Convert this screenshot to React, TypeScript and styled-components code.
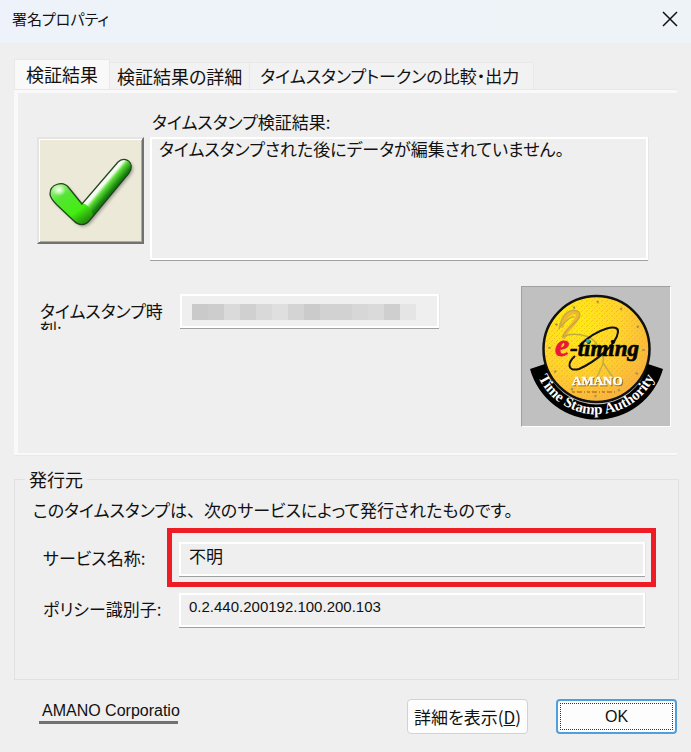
import React from "react";
import styled, { createGlobalStyle, css } from "styled-components";

const GlobalStyle = createGlobalStyle`
  *, *::before, *::after { box-sizing: border-box; }
  body {
    margin: 0;
    background: #efefef;
    color: #111;
    font-family: "Noto Sans CJK JP", "Liberation Sans", sans-serif;
    font-size: 17px;
    line-height: 24px;
    font-feature-settings: "palt";
  }
  button, input, textarea { font: inherit; color: inherit; font-feature-settings: inherit; }
`;

const Dialog = styled.main`
  min-height: 100vh;
  display: flex;
  flex-direction: column;
  background: #efefef;
`;

const TitleBar = styled.header`
  display: flex;
  align-items: center;
  justify-content: space-between;
  height: 43px;
  padding: 0 12px 5px;
  background: linear-gradient(90deg, #eef3fb, #eef3f8);
`;

const Title = styled.h1`
  margin: 0;
  font-size: 15px;
  font-weight: 400;
`;

const CloseButton = styled.button`
  display: grid;
  padding: 0;
  border: 0;
  background: none;
`;

const TabList = styled.div`
  display: flex;
  align-items: flex-end;
  height: 47px;
  padding: 0 14px;
`;

const Tab = styled.button<{ $selected?: boolean; $wide?: boolean }>`
  flex: none;
  height: 28px;
  padding: 0 ${(p) => (p.$wide ? "14px" : "7px")} 1px;
  border: 1px solid #e8e8e8;
  border-width: 1px 1px 0 0;
  background: #f2f2f2;
  white-space: nowrap;
  font-size: ${(p) => (p.$wide ? "17px" : "18px")};
  line-height: 24px;
  ${(p) =>
    p.$wide &&
    css`
      padding-left: 10px;
    `}
  ${(p) =>
    p.$selected &&
    css`
      height: 31px;
      padding: 0 11px 2px;
      border-left-width: 1px;
      background: #f9f9f9;
    `}
`;

const TabPanel = styled.section`
  margin: 0 14px;
  padding: 17px 6px 26px 19px;
  border: solid #f9f9f9;
  border-width: 3px 0 2px 4px;
  box-shadow: 0 1px #e8e8e8, 0 -1px #e8e8e8;
`;

const ResultArea = styled.div`
  display: grid;
  grid-template-columns: 107px 1fr;
  column-gap: 6px;
  padding-right: 23px;
`;

const StatusTile = styled.div`
  width: 107px;
  height: 107px;
  margin-top: 27px;
  border: 2px solid;
  border-color: #e4e4e4 #717171 #717171 #e4e4e4;
  box-shadow: inset 1px 1px #fff, inset -1px -1px #aaa;
  background: #ece9d8;
  svg { display: block; }
`;

const ResultLabel = styled.label`
  display: block;
  padding-left: 2px;
  margin-bottom: 3px;
`;

const sunken = css`
  display: block;
  width: 100%;
  border: 2px solid #fff;
  border-radius: 0;
  background: #efefef;
  box-shadow: 0 1px #a0a0a0, 1px 0 #e6e6e6;
  outline: none;
`;

const ResultText = styled.textarea`
  ${sunken}
  height: 123px;
  padding: 0 7px;
  line-height: 20px;
  resize: none;
  overflow: hidden;
`;

const Field = styled.input`
  ${sunken}
  height: 34px;
  padding: 0 8px 8px;
`;

const PolicyField = styled(Field)`
  font-family: "Liberation Sans", sans-serif;
  font-size: 15px;
`;

const TimeArea = styled.div`
  display: grid;
  grid-template-columns: 126px 1fr 150px;
  column-gap: 14px;
  padding-left: 3px;
  margin-top: 26px;
`;

const TimeLabel = styled.span`
  height: 28px;
  margin-top: 16px;
  overflow: hidden;
  line-height: 18px;
`;

const TimeValue = styled.div`
  ${sunken}
  max-width: 259px;
  height: 34px;
  margin-top: 8px;
  padding: 8px 10px;
  display: flex;
`;

const Mosaic = styled.i<{ $tone: string }>`
  flex: 0 1 16px;
  height: 16px;
  background: ${(p) => p.$tone};
`;

const Seal = styled.svg`
  display: block;
  width: 150px;
  height: 141px;
  border: 1px solid;
  border-color: #a0a0a0 #fff #fff #a0a0a0;
  background: #c0c0c0;
`;

const Issuer = styled.fieldset`
  min-width: 0;
  min-height: 213px;
  margin: 12px 12px 0 14px;
  padding: 7px 33px 0 18px;
  border: 1px solid #e1e1e1;
`;

const Legend = styled.legend`
  margin-left: -8px;
  padding: 0 4px;
  font-size: 18px;
`;

const Note = styled.p`
  margin: 0 0 20px;
`;

const FullWidth = styled.span`
  font-feature-settings: normal;
`;

const IssuerRow = styled.div`
  display: grid;
  grid-template-columns: 136px 1fr;
  align-items: center;
  padding-left: 10px;
  margin-bottom: 17px;
  > label { padding-bottom: 2px; }
`;

const Highlight = styled.div`
  position: relative;
  &::after {
    content: "";
    position: absolute;
    inset: -14px -11px -11px -12px;
    border: 5px solid #ee1c24;
    pointer-events: none;
  }
`;

const Footer = styled.footer`
  display: flex;
  align-items: flex-start;
  padding: 19px 14px 17px 39px;
`;

const Company = styled.span`
  width: 141px;
  height: 25px;
  padding-left: 3px;
  margin-right: auto;
  overflow: hidden;
  white-space: nowrap;
  font-family: "Liberation Sans", sans-serif;
  font-size: 16px;
  background: linear-gradient(#717171, #717171) left bottom / 139px 3px no-repeat;
`;

const PushButton = styled.button<{ $primary?: boolean }>`
  width: 121px;
  height: 35px;
  padding: 0;
  margin-left: 28px;
  border: 1px solid #d2d2d2;
  border-radius: 4px;
  background: #fdfdfd;
  white-space: nowrap;
  ${(p) =>
    p.$primary &&
    css`
      border: 2px solid #4f9fdf;
      outline: 1px dotted #333;
      outline-offset: -5px;
      font-family: "Liberation Sans", sans-serif;
      font-size: 16px;
    `}
`;

const tones = [
  "#cacaca", "#cdcdcd", "#dadada", "#d0d0d0", "#d9d9d9", "#dfdfdf", "#d4d4d4",
  "#cbcbcb", "#d2d2d2", "#d2d2d2", "#d7d7d7", "#dadada", "#cfcfcf", "#e5e5e5",
];

function CheckMark() {
  const shape =
    "M45 67 L32 51 C26 43 13 47 13 57 C13 61 16 64 20 68 L37 84 C42 89 48 89 53 83 L92 36 C99 26 88 18 81 25 Z";
  return (
    <svg width="103" height="103" viewBox="2 2 103 103" role="img" aria-label="OK">
      <defs>
        <linearGradient id="leaf" gradientUnits="userSpaceOnUse" x1="59" y1="46" x2="72" y2="57">
          <stop offset="0" stopColor="#fff" />
          <stop offset=".4" stopColor="#f4fbef" />
          <stop offset=".6" stopColor="#59dc34" />
          <stop offset="1" stopColor="#137c0b" />
        </linearGradient>
        <linearGradient id="stem" x1="0" y1="0" x2=".7" y2="1">
          <stop offset="0" stopColor="#b9f7a0" />
          <stop offset=".35" stopColor="#55e535" />
          <stop offset=".75" stopColor="#43ed11" />
          <stop offset="1" stopColor="#23920c" />
        </linearGradient>
        <radialGradient id="gloss">
          <stop offset="0" stopColor="#fff" />
          <stop offset="1" stopColor="#fff" stopOpacity="0" />
        </radialGradient>
        <filter id="soft" x="-20%" y="-20%" width="140%" height="140%">
          <feGaussianBlur stdDeviation="1.5" />
        </filter>
      </defs>
      <path d={shape} transform="translate(2 2)" fill="#777" opacity=".6" filter="url(#soft)" />
      <path d={shape} fill="url(#leaf)" />
      <path d="M45 67 L32 51 C26 43 13 47 13 57 C13 61 16 64 20 68 L37 84 C42 89 48 89 53 83 L56 78 C53 70 49 66 45 67Z" fill="url(#stem)" />
      <ellipse cx="22" cy="53" rx="7" ry="6" fill="url(#gloss)" />
      <path d={shape} fill="none" stroke="#23441d" strokeWidth="1.3" />
    </svg>
  );
}

const SealName = styled.text`
  font: 700 13px "Liberation Serif", serif;
  fill: #fff;
  stroke: #fff;
  stroke-width: 0.4px;
  filter: drop-shadow(1px 1px 0 #986d20);
`;

function ETimingSeal() {
  return (
    <Seal viewBox="1 1 148 139" role="img" aria-label="e-timing AMANO Time Stamp Authority">
      <defs>
        <radialGradient id="gold" cx=".3" cy=".25" r=".85">
          <stop offset="0" stopColor="#ffee10" />
          <stop offset=".5" stopColor="#ffd52a" />
          <stop offset="1" stopColor="#f7b040" />
        </radialGradient>
        <pattern id="grain" width="5" height="5" patternUnits="userSpaceOnUse">
          <path d="M0 0h1v1h-1zM3 2h1v1h-1zM1 4h1v1h-1z" fill="#f49b3d" opacity=".55" />
        </pattern>
        <path id="ribbon" d="M14 82 A64 64 0 0 0 137 82" />
      </defs>
      <circle cx="75.5" cy="63" r="53" fill="url(#gold)" stroke="#111" strokeWidth="2.5" />
      <circle cx="75.5" cy="63" r="51" fill="url(#grain)" />
      <path d="M9 83 L24 78 A53 53 0 0 0 127 78 L142 83 A69 69 0 0 1 9 83Z" fill="#000" />
      <circle cx="75.5" cy="63" r="47" fill="none" stroke="#a9924e" strokeWidth="2.5" strokeDasharray="2 22.6" />
      <g fill="none" stroke="#c0ab45" strokeLinecap="round">
        <path d="M41 40 C43 30 51 24 56 27 C61 34 43 44 43 51" strokeWidth="4" stroke="#f3b62d" />
        <g strokeWidth="1.4">
          <path d="M38 43 C41 27 50 21 58 26 C63 34 43 42 42 51 C50 46 69 48 75 57" />
          <path d="M39 41 C46 34 50 30 53 31" />
          <path d="M75 57 C82 68 84 74 81 80 L76 91 M82 77 L93 93" />
        </g>
      </g>
      <path d="M59 59 C77 42 98 37 97 46 C96 59 72 77 58 83 C45 86 47 76 54 70" fill="none" stroke="#111" strokeWidth="2" />
      <g fontFamily="Liberation Serif" fontStyle="italic" fontWeight="700">
        <text x="34" y="70" fontSize="32" fill="#e9183a" stroke="#e9183a" strokeWidth=".8">e</text>
        <text x="49" y="70" fontSize="23" fill="#050505" stroke="#050505" strokeWidth=".7">-timing</text>
      </g>
      <circle cx="67" cy="55" r="2" fill="#34a7b5" />
      <SealName x="51" y="99">AMANO</SealName>
      <path d="M51 106 H96" stroke="#b57b24" strokeWidth="1.5" strokeDasharray="3 2 5 2 1 2" />
      <text fontFamily="Liberation Serif" fontWeight="700" fontSize="15" fill="#fff">
        <textPath href="#ribbon" startOffset="50%" textAnchor="middle">Time Stamp Authority</textPath>
      </text>
    </Seal>
  );
}

export default function App() {
  return (
    <Dialog>
      <GlobalStyle />
      <TitleBar>
        <Title>署名プロパティ</Title>
        <CloseButton type="button" aria-label="閉じる">
          <svg width="18" height="18" viewBox="0 0 18 18">
            <path d="M2 2 L16 16 M16 2 L2 16" stroke="#111" strokeWidth="1.5" />
          </svg>
        </CloseButton>
      </TitleBar>

      <TabList role="tablist">
        <Tab type="button" role="tab" aria-selected="true" $selected>検証結果</Tab>
        <Tab type="button" role="tab" aria-selected="false">検証結果の詳細</Tab>
        <Tab type="button" role="tab" aria-selected="false" $wide>タイムスタンプトークンの比較・出力</Tab>
      </TabList>

      <TabPanel role="tabpanel">
        <ResultArea>
          <StatusTile><CheckMark /></StatusTile>
          <div>
            <ResultLabel htmlFor="result">タイムスタンプ検証結果:</ResultLabel>
            <ResultText id="result" readOnly value="タイムスタンプされた後にデータが編集されていません。" />
          </div>
        </ResultArea>
        <TimeArea>
          <TimeLabel id="time-label">タイムスタンプ時刻:</TimeLabel>
          <TimeValue aria-labelledby="time-label">
            {tones.map((tone, i) => <Mosaic key={i} $tone={tone} />)}
          </TimeValue>
          <ETimingSeal />
        </TimeArea>
      </TabPanel>

      <Issuer>
        <Legend>発行元</Legend>
        <Note>このタイムスタンプは<FullWidth>、</FullWidth>次のサービスによって発行されたものです。</Note>
        <IssuerRow>
          <label htmlFor="service">サービス名称:</label>
          <Highlight><Field id="service" readOnly value="不明" /></Highlight>
        </IssuerRow>
        <IssuerRow>
          <label htmlFor="policy">ポリシー識別子:</label>
          <PolicyField id="policy" readOnly value="0.2.440.200192.100.200.103" />
        </IssuerRow>
      </Issuer>

      <Footer>
        <Company>AMANO Corporation</Company>
        <PushButton type="button">詳細を表示(<u>D</u>)</PushButton>
        <PushButton type="button" $primary>OK</PushButton>
      </Footer>
    </Dialog>
  );
}
